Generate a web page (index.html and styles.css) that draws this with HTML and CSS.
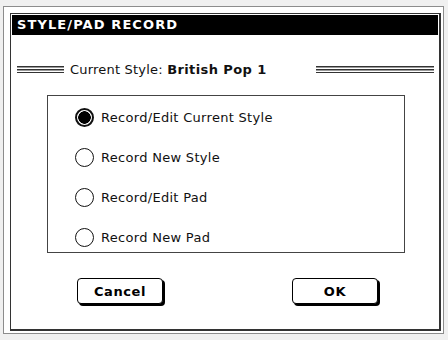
FILE: index.html
```html
<!DOCTYPE html>
<html lang="en">
<head>
    <meta charset="UTF-8">
    <meta name="viewport" content="width=device-width, initial-scale=1.0">
    <title>Style/Pad Record</title>
    <link rel="stylesheet" href="styles.css">
</head>
<body>

<!-- Cornice esterna -->
<div class="window">
    <div class="dialog">
        <div class="title-bar">STYLE/PAD RECORD</div>

        <!-- Stile corrente -->
        <div class="style-row">
            <div class="rule rule-left"></div>
            <div class="style-name">Current Style: <b>British Pop 1</b></div>
            <div class="rule rule-right"></div>
        </div>

        <!-- Opzioni -->
        <div class="options">
            <div class="option selected"><span class="radio"></span>Record/Edit Current Style</div>
            <div class="option"><span class="radio"></span>Record New Style</div>
            <div class="option"><span class="radio"></span>Record/Edit Pad</div>
            <div class="option"><span class="radio"></span>Record New Pad</div>
        </div>

        <div class="buttons">
            <button class="btn btn-cancel">Cancel</button>
            <button class="btn btn-ok">OK</button>
        </div>
    </div>
</div>

</body>
</html>
```

FILE: styles.css
```css
/* Impostazioni generali */
body {
    margin: 0;
    background-color: #f0f0f0;
    font-family: "DejaVu Sans", sans-serif;
    color: #111;
}

.window {
    margin: 6px 4px 3px 3px;
    border: 1px solid #8c8c8c;
    background-color: #fff;
    padding: 6px 2px 2px 6px;
}

.dialog {
    border-top: 1px solid #333;
    border-left: 1px solid #333;
    border-right: 2px solid #333;
    border-bottom: 2px solid #333;
    height: 318px;
    box-sizing: border-box;
    padding: 1px;
}

.title-bar {
    background-color: #000;
    color: #fff;
    height: 20px;
    line-height: 20px;
    padding-left: 5px;
    font-weight: bold;
    font-size: 13px;
    letter-spacing: 1.1px;
}

/* Riga stile corrente */
.style-row {
    display: flex;
    align-items: center;
    margin-top: 25px;
    height: 18px;
    font-size: 13px;
    letter-spacing: 0.2px;
}

.rule {
    height: 7px;
    background: repeating-linear-gradient(to bottom, #333 0 1px, #999 1px 2px, transparent 2px 3px);
}

.rule-left {
    width: 47px;
    margin-left: 5px;
    margin-right: 6px;
}

.rule-right {
    width: 118px;
    margin-left: auto;
    margin-right: 4px;
}

.style-name b {
    font-size: 13px;
    letter-spacing: 0.4px;
}

/* Box opzioni */
.options {
    margin: 17px 33px 0 35px;
    border: 1px solid #444;
    padding: 11px 0 5px 27px;
    display: flex;
    flex-direction: column;
    gap: 20px;
}

.option {
    display: flex;
    align-items: center;
    height: 20px;
    font-size: 13px;
    letter-spacing: 0.3px;
}

.radio {
    width: 19px;
    height: 19px;
    box-sizing: border-box;
    border: 1.5px solid #111;
    border-radius: 50%;
    margin-right: 7px;
    background-color: #fff;
}

.option.selected .radio {
    border-width: 2px;
    background: radial-gradient(circle, #000 0 6px, #fff 6.5px);
}

/* Pulsanti */
.buttons {
    display: flex;
    margin-top: 25px;
    padding-left: 65px;
    gap: 129px;
}

.btn {
    width: 86px;
    height: 26px;
    border: 1px solid #000;
    border-radius: 4px;
    box-shadow: 2px 2px 0 #000;
    background-color: #fff;
    font-family: "DejaVu Sans", sans-serif;
    font-weight: bold;
    font-size: 13px;
    letter-spacing: 0.6px;
    color: #000;
    padding: 0;
}
```
